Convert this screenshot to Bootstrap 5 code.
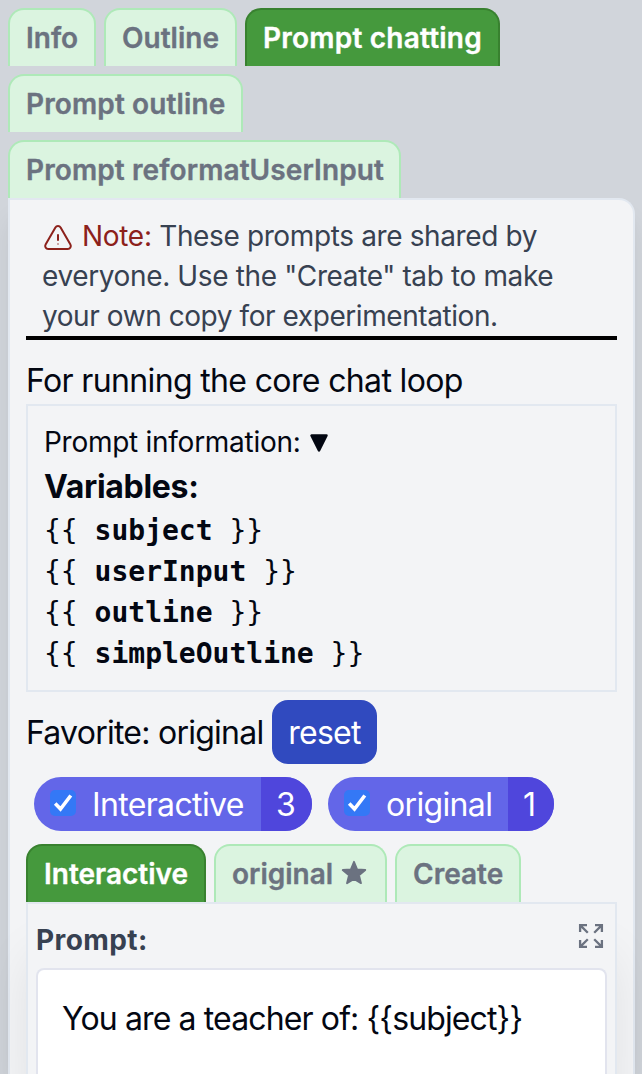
<!DOCTYPE html>
<html lang="en">
<head>
<meta charset="utf-8">
<meta name="viewport" content="width=device-width, initial-scale=1">
<title>Prompts</title>
<link rel="stylesheet" href="https://cdn.jsdelivr.net/npm/bootstrap@5.3.0/dist/css/bootstrap.min.css">
<style>
  body { background: #d1d5db; font-family: Inter, "Liberation Sans", sans-serif; font-size: 32px; line-height: 48px; color: #030712; }
  .page { padding: 8px 7px 0 8px; overflow: hidden; }
  .tab-strip { gap: 8px; }
  .tab-strip .nav-link { height: 58px; padding: 8px 0 0 16px; border: 2px solid #aee9b8; border-bottom: 0; border-radius: 16px 16px 0 0; background: #dbf4e0; color: #6b7280; font-size: 28px; line-height: 40px; font-weight: 600; white-space: nowrap; -webkit-text-stroke: .35px currentColor; }
  .tab-strip .nav-link.active { background: #45993d; border-color: #38812f; color: #fff; }
  .outer-panel { border: 2px solid #e2e8f0; border-bottom: 0; border-radius: 0 16px 0 0; background: #f3f4f6; padding: 16px 16px 0; min-height: 0; box-shadow: 0 20px 30px -6px rgba(0,0,0,.1), 0 8px 12px -8px rgba(0,0,0,.1); }
  .note { font-size: 28px; line-height: 40px; color: #374151; padding-left: 16px; border-bottom: 4px solid #000; height: 124px; letter-spacing: -.37px; white-space: nowrap; }
  .note .tag { color: #8c211b; letter-spacing: -.3px; }
  .note .last { letter-spacing: -.43px; }
  .warn { width: 32px; height: 32px; display: inline-block; vertical-align: -9px; margin-right: 8px; }
  .headline { margin-top: 16px; height: 48px; padding-top: 1px; letter-spacing: -.64px; }
  .info-box { border: 2px solid #e2e8f0; padding: 16px; height: 288px; }
  .info-title { font-size: 28px; line-height: 40px; letter-spacing: -.27px; }
  .info-title svg { margin-left: 1px; vertical-align: -1px; }
  .vars-title { height: 48px; padding-top: 1px; font-weight: 700; letter-spacing: -.3px; }
  .var-line { font: 28px/41px "DejaVu Sans Mono", monospace; white-space: pre; }
  .fav { margin-top: 8px; height: 64px; letter-spacing: -.75px; }
  .fav-text { padding-top: 2px; width: 238px; white-space: nowrap; }
  .btn-reset { width: 105px; height: 64px; margin-left: 8px; border: 0; border-radius: 16px; background: #304abf; color: #fff; font-size: 32px; line-height: 48px; padding: 9px 0 7px; letter-spacing: -.7px; }
  .pills { margin: 13px 0 0 8px; gap: 16px; }
  .pill { height: 54px; line-height: 55px; border-radius: 27px; background: #6366e8; color: #fff; overflow: hidden; letter-spacing: -.65px; }
  .tick { width: 26px; height: 26px; margin: 0 16px 2px; flex: none; }
  .pill .num { background: #4f46dc; padding-left: 15px; }
  .pills + .tab-strip { margin-top: 13px; }
  .inner-panel { border: 2px solid #e2e8f0; border-bottom: 0; padding: 8px 8px 0; min-height: 0; background: #f3f4f6; box-shadow: 0 48px 50px -8px rgba(0,0,0,.1); }
  .field-label { font-size: 28px; line-height: 56px; font-weight: 700; color: #374151; letter-spacing: .4px; }
  .expand { width: 26px; height: 26px; margin: 11px 3px 0 0; }
  .field { border: 2px solid #e2e4ee; border-bottom: 0; border-radius: 8px 8px 0 0; background: #fff; padding: 25px 24px 0; letter-spacing: -.87px; white-space: nowrap; }
</style>
</head>
<body>
<main class="page vh-100 d-flex flex-column">
  <nav class="nav tab-strip">
    <a class="nav-link" style="width:88px">Info</a>
    <a class="nav-link" style="width:133px">Outline</a>
    <a class="nav-link active" style="width:255px;letter-spacing:.22px">Prompt chatting</a>
  </nav>
  <nav class="nav tab-strip flex-column mt-2">
    <a class="nav-link" style="width:235px;letter-spacing:.12px">Prompt outline</a>
    <a class="nav-link" style="width:393px;letter-spacing:.1px">Prompt reformatUserInput</a>
  </nav>
  <section class="outer-panel flex-fill d-flex flex-column">
    <div class="note"><svg class="warn" viewBox="0 0 24 24" fill="none" stroke="#8c211b" stroke-width="1.5" stroke-linecap="round" stroke-linejoin="round"><path d="M12 9v3.750m-9.303 3.376c-.866 1.500.217 3.374 1.948 3.374h14.710c1.730 0 2.813-1.874 1.948-3.374L13.949 3.378c-.866-1.500-3.032-1.500-3.898 0L2.697 16.126z"/><path d="M12 15.750h.007v.008H12v-.008z" stroke-width="1"/></svg><span class="tag">Note:</span> These prompts are shared by<br>everyone. Use the "Create" tab to make<br><span class="last">your own copy for experimentation.</span></div>
    <div class="headline">For running the core chat loop</div>
    <div class="info-box">
      <div class="info-title">Prompt information: <svg width="20" height="20" viewBox="0 0 20 20"><path d="M2.500 2.500h15L10 17.500z" fill="#030712" stroke="#030712" stroke-width="2.500" stroke-linejoin="round"/></svg></div>
      <div class="vars-title">Variables:</div>
      <div class="var-line">{{ <b>subject</b> }}</div>
      <div class="var-line">{{ <b>userInput</b> }}</div>
      <div class="var-line">{{ <b>outline</b> }}</div>
      <div class="var-line">{{ <b>simpleOutline</b> }}</div>
    </div>
    <div class="fav d-flex align-items-center"><span class="fav-text">Favorite: original</span><button class="btn btn-reset">reset</button></div>
    <div class="pills d-flex">
      <div class="pill d-flex align-items-center" style="width:278px"><svg class="tick" viewBox="0 0 26 26"><rect width="26" height="26" rx="5" fill="#3478f6"/><path d="M5.200 13.500l5.300 5.500L20.800 5.500" fill="none" stroke="#fff" stroke-width="3.600"/></svg><span style="width:169px">Interactive</span><span class="num flex-fill">3</span></div>
      <div class="pill d-flex align-items-center" style="width:226px"><svg class="tick" viewBox="0 0 26 26"><rect width="26" height="26" rx="5" fill="#3478f6"/><path d="M5.200 13.500l5.300 5.500L20.800 5.500" fill="none" stroke="#fff" stroke-width="3.600"/></svg><span style="width:122px">original</span><span class="num flex-fill">1</span></div>
    </div>
    <nav class="nav tab-strip">
      <a class="nav-link active" style="width:180px">Interactive</a>
      <a class="nav-link" style="width:173px">original <svg width="26" height="26" viewBox="0 0 26 26" style="vertical-align:-2px;margin-left:1px"><path d="M13 1.800l3.100 7.600 8.200.6-6.300 5.200 2 8L13 18.900l-7 4.300 2-8L1.700 10l8.200-.6z" fill="#6b7280" stroke="#6b7280" stroke-width="1.800" stroke-linejoin="round"/></svg></a>
      <a class="nav-link" style="width:126px">Create</a>
    </nav>
    <section class="inner-panel flex-fill d-flex flex-column">
      <div class="d-flex justify-content-between">
        <div class="field-label">Prompt:</div>
        <svg class="expand" viewBox="0 0 26 26" fill="none" stroke="#6b7280" stroke-width="2.300"><path d="M2.100 9V2.100H9M2.100 2.100l7.700 7.700M17 2.100h6.900V9M23.900 2.100l-7.700 7.700M2.100 17v6.900H9M2.100 23.900l7.700-7.700M17 23.900h6.900V17M23.900 23.900l-7.700-7.700"/></svg>
      </div>
      <div class="field flex-fill">You are a teacher of: {{subject}}</div>
    </section>
  </section>
</main>
<script src="https://cdn.jsdelivr.net/npm/bootstrap@5.3.0/dist/js/bootstrap.bundle.min.js"></script>
</body>
</html>
